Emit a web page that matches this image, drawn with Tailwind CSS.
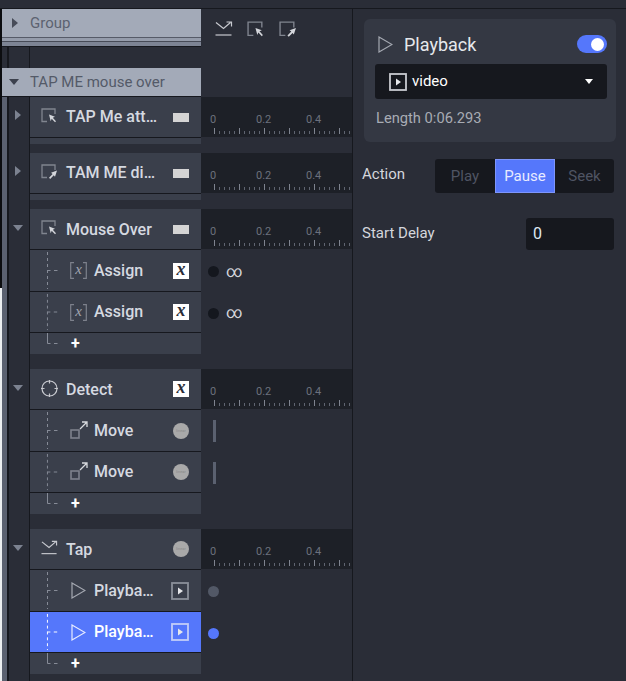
<!DOCTYPE html>
<html lang="en">
<head>
  <meta charset="UTF-8">
  <title>Timeline</title>
  <script src="https://cdn.jsdelivr.net/npm/@tailwindcss/browser@4"></script>
</head>
<body class="bg-[#2a2d37] font-['Roboto',sans-serif] overflow-hidden">
  <!-- shared icons -->
  <svg width="0" height="0" class="absolute">
    <defs>
      <pattern id="tick-pattern" width="25" height="7" patternUnits="userSpaceOnUse">
        <path d="M0.5 0v6" stroke="#7e838f"/>
        <path d="M5.500 3v3M10.500 3v3M15.500 3v3M20.500 3v3" stroke="#5f6470"/>
      </pattern>
    </defs>
    <symbol id="ticks" viewBox="0 0 138 7"><rect width="138" height="7" fill="url(#tick-pattern)"/></symbol>
    <symbol id="attract" viewBox="0 0 17 16">
      <path d="M6 13.500H1V1h13v5" fill="none" stroke="#80858f" stroke-width="1.300"/>
      <path d="M8 6.500l6 2.200-2.200 1 3.200 3.600-1 1-3.300-3.500-1 2.400z" fill="#d4d6db"/>
    </symbol>
    <symbol id="direct" viewBox="0 0 17 16">
      <path d="M6 13.500H1V1h13v5" fill="none" stroke="#80858f" stroke-width="1.300"/>
      <path d="M16 6.500l-6 2.200 1.600 1.300-3.600 3.700 1.200 1.200 3.600-3.700 1.200 1.600z" fill="#d4d6db"/>
    </symbol>
    <symbol id="tap" viewBox="0 0 18 15">
      <path d="M0.500 14h16" stroke="#c8cad0" stroke-width="1.200"/>
      <path d="M1 1.500l7.500 6 7-6M11.500 1h5v4.500" fill="none" stroke="#c8cad0" stroke-width="1.200"/>
    </symbol>
    <symbol id="move" viewBox="0 0 18 18">
      <rect x="1" y="9" width="8" height="8" fill="none" stroke="#7d818c" stroke-width="1.600"/>
      <path d="M10 8l7-7M12 1h5v5" fill="none" stroke="#d8dade" stroke-width="1.300"/>
    </symbol>
    <symbol id="play" viewBox="0 0 15 17">
      <path d="M1 1l13 7.500L1 16z" fill="none" stroke="#a4a8b1" stroke-width="1.200"/>
    </symbol>
    <symbol id="brackets" viewBox="0 0 17 17">
      <path d="M4 0.700H0.700v15.600H4M13 0.700h3.300v15.600H13" fill="none" stroke="#7d818c" stroke-width="1.200"/>
    </symbol>
    <symbol id="tree" viewBox="0 0 30 41">
      <path d="M17.500 2v37" fill="none" stroke="currentColor" stroke-dasharray="3 3"/>
      <path d="M17.500 20.500h3M24 20.500h3.500" fill="none" stroke="currentColor"/>
    </symbol>
    <symbol id="tree-end" viewBox="0 0 30 21">
      <path d="M17.500 0v10.500h3M24 10.500h3.500" fill="none" stroke="#868b97"/>
    </symbol>
    <symbol id="media" viewBox="0 0 18 18">
      <rect x="1" y="1" width="16" height="16" fill="none" stroke="currentColor" stroke-width="1.800"/>
      <path d="M7 5.500l5 3.500-5 3.500z" fill="#e6e7ea"/>
    </symbol>
    <symbol id="caret-right" viewBox="0 0 6 10"><path d="M0 0l6 5-6 5z" fill="currentColor"/></symbol>
    <symbol id="caret-down" viewBox="0 0 10 6"><path d="M0 0h10l-5 6z" fill="currentColor"/></symbol>
  </svg>

  <div class="h-[9px] border-b border-[#16181e]"></div>

  <div class="flex h-[672px] overflow-hidden">
    <div class="w-[2px] flex flex-col shrink-0">
      <div class="h-[279px] bg-[#0c0d10]"></div>
      <div class="flex-1 bg-[#eceef0]"></div>
    </div>

    <!-- timeline tree -->
    <div class="w-[350px] shrink-0">
      <div class="flex h-[38px]">
        <div class="w-[199px] flex flex-col">
          <div class="h-[28px] bg-[#a3aab8] flex items-center text-[15px] text-[#5c6270]">
            <svg class="w-[6px] h-[10px] ml-[10px] mr-[12px] -mt-[1px] text-[#474c59]"><use href="#caret-right"/></svg>Group
          </div>
          <div class="h-[1px] bg-[#565b68]"></div>
          <div class="h-[3px] bg-[#959cab]"></div>
          <div class="h-[1px] bg-[#474b57]"></div>
          <div class="h-[4px] bg-[#7d8494]"></div>
          <div class="h-[1px] bg-[#16181e]"></div>
        </div>
        <div class="flex items-start pt-[12px] pl-[14px] gap-[14px]">
          <svg class="w-[18px] h-[15px]"><use href="#tap"/></svg>
          <svg class="w-[18px] h-[17px]"><use href="#attract"/></svg>
          <svg class="w-[18px] h-[17px]"><use href="#direct"/></svg>
        </div>
      </div>

      <div class="h-[21px] ml-[5px] w-[23px] border-l-2 border-r border-[#16181e]"></div>

      <div class="w-[199px] h-[29px] bg-[#a3aab8] border-b border-[#16181e] flex items-center text-[15px] text-[#545a68]">
        <svg class="w-[10px] h-[6px] ml-[7px] mr-[11px] -mt-[1px] text-[#3c414d]"><use href="#caret-down"/></svg>TAP ME mouse over
      </div>

      <div class="flex">
        <div class="w-[5px] bg-[#5b6170] shrink-0"></div>
        <div class="flex-1">

          <!-- TAP Me attract -->
          <section class="flex h-[56px]">
            <div class="w-[23px] border-l-2 border-r border-[#16181e] shrink-0 h-full flex justify-center pt-[13px] text-[#7c8290] pr-[3px]">
              <svg class="w-[6px] h-[10px]"><use href="#caret-right"/></svg>
            </div>
            <div class="flex-1">
              <div class="flex h-[41px]">
                <div class="w-[171px] h-[41px] bg-[#3a3f4b] border-b border-[#16181e] flex items-center text-[16px] font-medium text-[#d5d9e0] shrink-0">
                  <svg class="w-[17px] h-[16px] ml-[11px] mr-[8px] -mt-[3px]"><use href="#attract"/></svg>
                  <span class="w-[107px] whitespace-nowrap">TAP Me att…</span>
                  <span class="w-[16px] h-[9px] bg-[#d4d4d4]"></span>
                </div>
                <div class="flex-1 h-[40px] bg-[#1d2027] pt-[16px] overflow-hidden">
                  <div class="flex text-[11px] leading-[13px] text-[#6c717d] pl-[9px]"><span class="w-[46px]">0</span><span class="w-[50px]">0.2</span><span>0.4</span></div>
                  <svg class="block w-[138px] h-[7px] ml-[13px] mt-[2px]"><use href="#ticks"/></svg>
                </div>
              </div>
              <div class="w-[171px] h-[6px] bg-[#3a3f4b]"></div>
            </div>
          </section>

          <!-- TAM ME direct -->
          <section class="flex h-[56px]">
            <div class="w-[23px] border-l-2 border-r border-[#16181e] shrink-0 h-full flex justify-center pt-[13px] text-[#7c8290] pr-[3px]">
              <svg class="w-[6px] h-[10px]"><use href="#caret-right"/></svg>
            </div>
            <div class="flex-1">
              <div class="flex h-[41px]">
                <div class="w-[171px] h-[41px] bg-[#3a3f4b] border-b border-[#16181e] flex items-center text-[16px] font-medium text-[#d5d9e0] shrink-0">
                  <svg class="w-[17px] h-[16px] ml-[11px] mr-[8px] -mt-[3px]"><use href="#direct"/></svg>
                  <span class="w-[107px] whitespace-nowrap">TAM ME di…</span>
                  <span class="w-[16px] h-[9px] bg-[#d4d4d4]"></span>
                </div>
                <div class="flex-1 h-[40px] bg-[#1d2027] pt-[16px] overflow-hidden">
                  <div class="flex text-[11px] leading-[13px] text-[#6c717d] pl-[9px]"><span class="w-[46px]">0</span><span class="w-[50px]">0.2</span><span>0.4</span></div>
                  <svg class="block w-[138px] h-[7px] ml-[13px] mt-[2px]"><use href="#ticks"/></svg>
                </div>
              </div>
              <div class="w-[171px] h-[6px] bg-[#3a3f4b]"></div>
            </div>
          </section>

          <!-- Mouse Over -->
          <section class="flex h-[160px]">
            <div class="w-[23px] border-l-2 border-r border-[#16181e] shrink-0 h-full flex justify-center pt-[16px] text-[#7c8290] pr-[2px]">
              <svg class="w-[10px] h-[6px]"><use href="#caret-down"/></svg>
            </div>
            <div class="flex-1">
              <div class="flex h-[41px]">
                <div class="w-[171px] h-[41px] bg-[#3a3f4b] border-b border-[#16181e] flex items-center pt-[2px] text-[16px] font-medium text-[#d5d9e0] shrink-0">
                  <svg class="w-[17px] h-[16px] ml-[11px] mr-[8px] -mt-[5px]"><use href="#attract"/></svg>
                  <span class="w-[107px] whitespace-nowrap">Mouse Over</span>
                  <span class="w-[16px] h-[9px] bg-[#d4d4d4] -mt-[2px]"></span>
                </div>
                <div class="flex-1 h-[40px] bg-[#1d2027] pt-[16px] overflow-hidden">
                  <div class="flex text-[11px] leading-[13px] text-[#6c717d] pl-[9px]"><span class="w-[46px]">0</span><span class="w-[50px]">0.2</span><span>0.4</span></div>
                  <svg class="block w-[138px] h-[7px] ml-[13px] mt-[2px]"><use href="#ticks"/></svg>
                </div>
              </div>
              <div class="flex h-[42px]">
                <div class="w-[171px] bg-[#3a3f4b] border-b border-[#16181e] flex items-center text-[16px] font-medium text-[#d5d9e0] shrink-0">
                  <svg class="w-[30px] h-[41px] mr-[10px] text-[#868b97]"><use href="#tree"/></svg>
                  <span class="relative w-[17px] h-[17px] mr-[7px] text-[#a2a6b0] font-['Liberation_Serif',serif] italic font-normal text-[15px] leading-[15px] text-center">x<svg class="absolute inset-0 w-[17px] h-[17px]"><use href="#brackets"/></svg></span>
                  <span class="w-[79px] whitespace-nowrap">Assign</span>
                  <span class="w-[16px] h-[16px] bg-white text-[#2a2d37] font-['Liberation_Serif',serif] italic font-bold text-[18px] leading-[13px] text-center">x</span>
                </div>
                <div class="flex-1 flex items-center pl-[7px] pt-[1px]">
                  <span class="w-[11px] h-[11px] rounded-full bg-[#14171e]"></span>
                  <span class="ml-[7px] text-[16px] leading-none text-[#d5d7dc]">∞</span>
                </div>
              </div>
              <div class="flex h-[41px]">
                <div class="w-[171px] bg-[#3a3f4b] border-b border-[#16181e] flex items-center text-[16px] font-medium text-[#d5d9e0] shrink-0">
                  <svg class="w-[30px] h-[40px] mr-[10px] text-[#868b97]"><use href="#tree"/></svg>
                  <span class="relative w-[17px] h-[17px] mr-[7px] text-[#a2a6b0] font-['Liberation_Serif',serif] italic font-normal text-[15px] leading-[15px] text-center">x<svg class="absolute inset-0 w-[17px] h-[17px]"><use href="#brackets"/></svg></span>
                  <span class="w-[79px] whitespace-nowrap">Assign</span>
                  <span class="w-[16px] h-[16px] bg-white text-[#2a2d37] font-['Liberation_Serif',serif] italic font-bold text-[18px] leading-[13px] text-center">x</span>
                </div>
                <div class="flex-1 flex items-center pl-[7px] pt-[1px]">
                  <span class="w-[11px] h-[11px] rounded-full bg-[#14171e]"></span>
                  <span class="ml-[7px] text-[16px] leading-none text-[#d5d7dc]">∞</span>
                </div>
              </div>
              <div class="w-[171px] h-[21px] bg-[#3a3f4b] flex items-center text-white font-bold text-[16px]">
                <svg class="w-[30px] h-[21px] mr-[11px]"><use href="#tree-end"/></svg>+
              </div>
            </div>
          </section>

          <!-- Detect -->
          <section class="flex h-[160px]">
            <div class="w-[23px] border-l-2 border-r border-[#16181e] shrink-0 h-full flex justify-center pt-[16px] text-[#7c8290] pr-[2px]">
              <svg class="w-[10px] h-[6px]"><use href="#caret-down"/></svg>
            </div>
            <div class="flex-1">
              <div class="flex h-[41px]">
                <div class="w-[171px] h-[41px] bg-[#3a3f4b] border-b border-[#16181e] flex items-center pt-[2px] text-[16px] font-medium text-[#d5d9e0] shrink-0">
                  <svg class="w-[17px] h-[17px] ml-[11px] mr-[8px] -mt-[4px]" viewBox="0 0 17 17"><circle cx="8.500" cy="8.500" r="7.500" fill="none" stroke="#c8cad0" stroke-width="1.200"/><path d="M8.500 0v3.500M8.500 13.500V17M0 8.500h3.500M13.500 8.500H17" stroke="#c8cad0" stroke-width="1.200"/></svg>
                  <span class="w-[107px] whitespace-nowrap">Detect</span>
                  <span class="w-[16px] h-[16px] -mt-[2px] bg-white text-[#2a2d37] font-['Liberation_Serif',serif] italic font-bold text-[18px] leading-[13px] text-center">x</span>
                </div>
                <div class="flex-1 h-[40px] bg-[#1d2027] pt-[16px] overflow-hidden">
                  <div class="flex text-[11px] leading-[13px] text-[#6c717d] pl-[9px]"><span class="w-[46px]">0</span><span class="w-[50px]">0.2</span><span>0.4</span></div>
                  <svg class="block w-[138px] h-[7px] ml-[13px] mt-[2px]"><use href="#ticks"/></svg>
                </div>
              </div>
              <div class="flex h-[42px]">
                <div class="w-[171px] bg-[#3a3f4b] border-b border-[#16181e] flex items-center text-[16px] font-medium text-[#d5d9e0] shrink-0">
                  <svg class="w-[30px] h-[41px] mr-[10px] text-[#868b97]"><use href="#tree"/></svg>
                  <svg class="w-[18px] h-[18px] mr-[6px] -mt-[2px]"><use href="#move"/></svg>
                  <span class="w-[79px] whitespace-nowrap">Move</span>
                  <span class="w-[16px] h-[16px] rounded-full bg-[#a9a9a9] text-[#8a8a8a] text-[4px] leading-[16px] text-center font-normal">linear</span>
                </div>
                <div class="flex-1 flex items-center pl-[12px]">
                  <span class="w-[3px] h-[22px] bg-[#5b6170]"></span>
                </div>
              </div>
              <div class="flex h-[41px]">
                <div class="w-[171px] bg-[#3a3f4b] border-b border-[#16181e] flex items-center text-[16px] font-medium text-[#d5d9e0] shrink-0">
                  <svg class="w-[30px] h-[40px] mr-[10px] text-[#868b97]"><use href="#tree"/></svg>
                  <svg class="w-[18px] h-[18px] mr-[6px] -mt-[2px]"><use href="#move"/></svg>
                  <span class="w-[79px] whitespace-nowrap">Move</span>
                  <span class="w-[16px] h-[16px] rounded-full bg-[#a9a9a9] text-[#8a8a8a] text-[4px] leading-[16px] text-center font-normal">linear</span>
                </div>
                <div class="flex-1 flex items-center pl-[12px]">
                  <span class="w-[3px] h-[22px] bg-[#5b6170]"></span>
                </div>
              </div>
              <div class="w-[171px] h-[21px] bg-[#3a3f4b] flex items-center text-white font-bold text-[16px]">
                <svg class="w-[30px] h-[21px] mr-[11px]"><use href="#tree-end"/></svg>+
              </div>
            </div>
          </section>

          <!-- Tap -->
          <section class="flex h-[160px]">
            <div class="w-[23px] border-l-2 border-r border-[#16181e] shrink-0 h-full flex justify-center pt-[16px] text-[#7c8290] pr-[2px]">
              <svg class="w-[10px] h-[6px]"><use href="#caret-down"/></svg>
            </div>
            <div class="flex-1">
              <div class="flex h-[41px]">
                <div class="w-[171px] h-[41px] bg-[#3a3f4b] border-b border-[#16181e] flex items-center pt-[2px] text-[16px] font-medium text-[#d5d9e0] shrink-0">
                  <svg class="w-[17px] h-[15px] ml-[11px] mr-[8px] -mt-[5px]"><use href="#tap"/></svg>
                  <span class="w-[107px] whitespace-nowrap">Tap</span>
                  <span class="w-[16px] h-[16px] -mt-[2px] rounded-full bg-[#a9a9a9] text-[#8a8a8a] text-[4px] leading-[16px] text-center font-normal">linear</span>
                </div>
                <div class="flex-1 h-[40px] bg-[#1d2027] pt-[16px] overflow-hidden">
                  <div class="flex text-[11px] leading-[13px] text-[#6c717d] pl-[9px]"><span class="w-[46px]">0</span><span class="w-[50px]">0.2</span><span>0.4</span></div>
                  <svg class="block w-[138px] h-[7px] ml-[13px] mt-[2px]"><use href="#ticks"/></svg>
                </div>
              </div>
              <div class="flex h-[42px]">
                <div class="w-[171px] bg-[#3a3f4b] border-b border-[#16181e] flex items-center text-[16px] font-medium text-[#d5d9e0] shrink-0">
                  <svg class="w-[30px] h-[41px] mr-[11px] text-[#868b97]"><use href="#tree"/></svg>
                  <svg class="w-[15px] h-[17px] mr-[8px]"><use href="#play"/></svg>
                  <span class="w-[78px] whitespace-nowrap">Playba…</span>
                  <svg class="w-[18px] h-[18px] -ml-[1px] text-[#8b8f9a]"><use href="#media"/></svg>
                </div>
                <div class="flex-1 flex items-center pl-[7px] pt-[1px]">
                  <span class="w-[11px] h-[11px] rounded-full bg-[#525866]"></span>
                </div>
              </div>
              <div class="flex h-[41px]">
                <div class="w-[171px] bg-[#5577fb] border-b border-[#16181e] flex items-center text-[16px] font-medium text-white shrink-0">
                  <svg class="w-[30px] h-[40px] mr-[11px] text-white"><use href="#tree"/></svg>
                  <svg class="w-[15px] h-[17px] mr-[8px]" viewBox="0 0 15 17"><path d="M1 1l13 7.500L1 16z" fill="none" stroke="#e8ebff" stroke-width="1.200"/></svg>
                  <span class="w-[78px] whitespace-nowrap">Playba…</span>
                  <svg class="w-[18px] h-[18px] -ml-[1px] text-[#c3cdf8]"><use href="#media"/></svg>
                </div>
                <div class="flex-1 flex items-center pl-[7px] pt-[1px]">
                  <span class="w-[11px] h-[11px] rounded-full bg-[#5577fb]"></span>
                </div>
              </div>
              <div class="w-[171px] h-[21px] bg-[#3a3f4b] flex items-center text-white font-bold text-[16px]">
                <svg class="w-[30px] h-[21px] mr-[11px]"><use href="#tree-end"/></svg>+
              </div>
            </div>
          </section>
        </div>
      </div>
    </div>

    <!-- properties -->
    <div class="w-[274px] shrink-0 border-l border-[#16181e] pl-[9px] pr-[12px]">
      <div class="ml-[2px] mt-[10px] w-[252px] h-[123px] bg-[#343843] rounded-md pl-[11px] pr-[9px] pt-[15px]">
        <div class="flex items-center h-[20px]">
          <svg class="w-[15px] h-[17px] ml-[3px] mr-[11px]"><use href="#play"/></svg>
          <span class="text-[18px] text-[#e6e8ec]">Playback</span>
          <span class="ml-auto w-[30px] h-[18px] rounded-full bg-[#5577fb] flex items-center justify-end pr-[3px]"><span class="w-[13px] h-[13px] rounded-full bg-white"></span></span>
        </div>
        <div class="mt-[10px] h-[35px] bg-[#16181e] rounded-[3px] flex items-center pl-[14px] pr-[14px] text-[15px] text-white">
          <svg class="w-[18px] h-[18px] mr-[5px] text-[#c8cad0]"><use href="#media"/></svg>
          video
          <svg class="w-[8px] h-[5px] ml-auto text-white"><use href="#caret-down"/></svg>
        </div>
        <div class="mt-[10px] ml-[1px] text-[14.700px] leading-[18px] text-[#a8acb4]">Length 0:06.293</div>
      </div>

      <div class="mt-[17px] flex items-center h-[34px]">
        <span class="text-[15px] text-[#d4d6dc] -mt-[4px]">Action</span>
        <div class="ml-auto w-[179px] h-[34px] bg-[#16181e] rounded-[3px] flex text-[15px] text-[#4f5463]">
          <span class="w-[60px] flex items-center justify-center">Play</span>
          <span class="w-[60px] flex items-center justify-center bg-[#5577fb] border border-[#7d95fb] text-[#e8ebff]">Pause</span>
          <span class="flex-1 flex items-center justify-center">Seek</span>
        </div>
      </div>

      <div class="mt-[25px] flex items-center h-[32px]">
        <span class="text-[15px] text-[#d4d6dc] -mt-[1px]">Start Delay</span>
        <div class="ml-auto w-[88px] h-[32px] bg-[#16181e] rounded-[3px] pl-[7px] flex items-center text-[16px] text-[#dfe7f0]">0</div>
      </div>
    </div>
  </div>
</body>
</html>
